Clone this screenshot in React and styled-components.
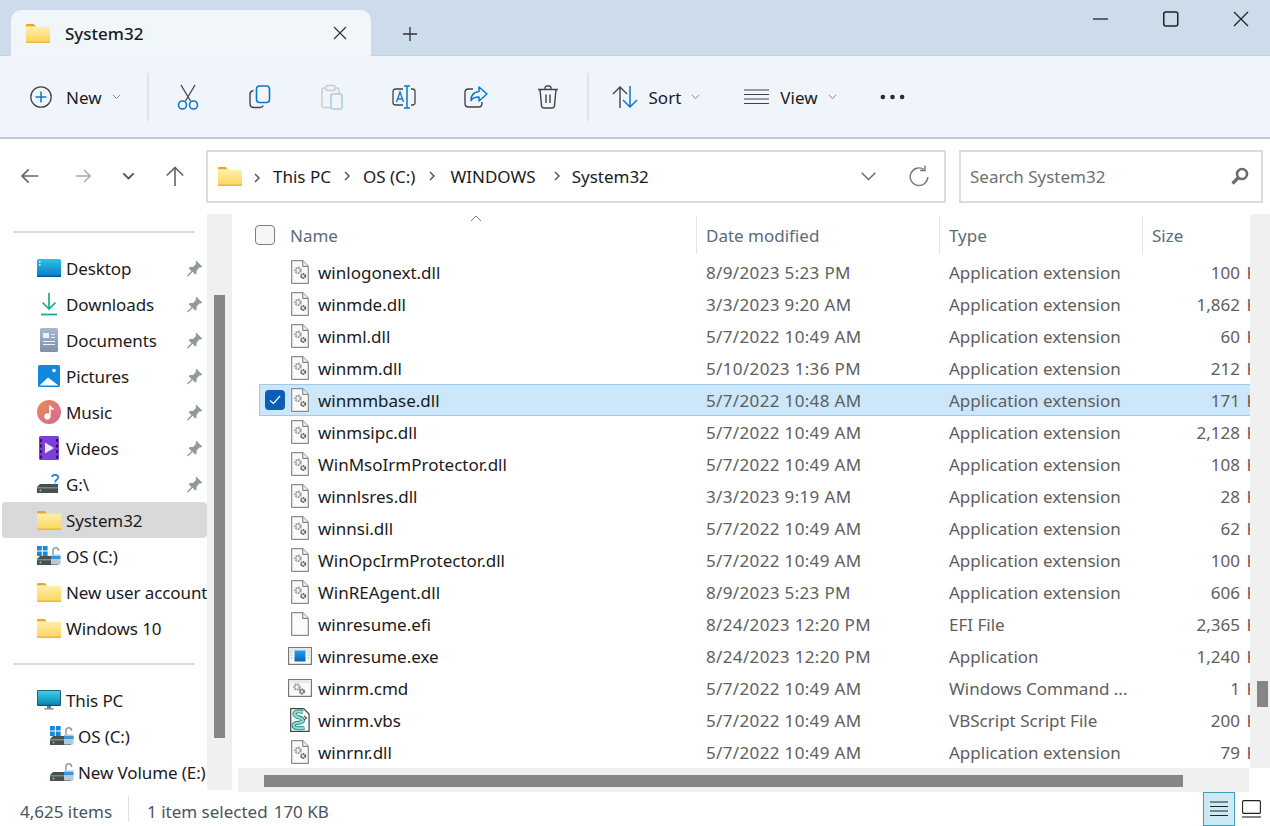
import styled, { createGlobalStyle } from 'styled-components'

const GlobalStyle = createGlobalStyle`
  html, body {
    margin: 0;
    padding: 0;
    background: #fff;
  }
  * {
    box-sizing: border-box;
  }
`

const Window = styled.div`
  width: 1270px;
  height: 826px;
  overflow: hidden;
  display: flex;
  flex-direction: column;
  background: #fff;
  color: #1b1b1b;
  font-family: 'Noto Sans', 'Open Sans', sans-serif;
  font-size: 17px;
`

const TitleBar = styled.div`
  height: 56px;
  flex: none;
  display: flex;
  align-items: flex-end;
  padding-left: 11px;
  background: #cddceb;
  border-bottom: 1px solid #c3d2e0;
`

const Tab = styled.div`
  width: 360px;
  height: 46px;
  margin-bottom: -1px;
  display: flex;
  align-items: center;
  padding: 0 24px 0 15px;
  background: #f1f6fb;
  border-radius: 10px 10px 0 0;
`

const TabTitle = styled.span`
  margin-left: 15px;
  flex: 1;
  font-weight: 500;
`

const NewTab = styled.div`
  margin: 0 0 15px 31px;
  height: 16px;
`

const WindowControls = styled.div`
  margin-left: auto;
  align-self: flex-start;
  display: flex;
  gap: 54px;
  padding: 11px 21px 0 0;
`

const Toolbar = styled.div`
  height: 83px;
  flex: none;
  display: flex;
  align-items: center;
  padding-left: 30px;
  background: #f0f5fb;
  border-bottom: 2px solid #bccad7;
`

const ToolGroup = styled.div`
  display: flex;
  align-items: center;
  margin-left: ${props => props.$offset || 0}px;
`

const ToolLabel = styled.span`
  margin-left: ${props => props.$gap}px;
  margin-right: 10px;
  padding-top: 2px;
`

const ToolDivider = styled.div`
  width: 2px;
  height: 48px;
  margin-left: ${props => props.$offset}px;
  background: #dfe4ea;
`

const IconButton = styled.div`
  width: 72px;
  display: flex;
  justify-content: center;
`

const AddressRow = styled.div`
  height: 75px;
  flex: none;
  display: flex;
  align-items: center;
  padding-bottom: 1px;
`

const NavArrows = styled.div`
  width: 206px;
  flex: none;
  display: grid;
  grid-template-columns: 54px 48px 43px 20px;
  padding-left: 20px;
  justify-items: start;
  align-items: center;
`

const AddressBox = styled.div`
  width: 740px;
  height: 53px;
  flex: none;
  display: flex;
  align-items: center;
  padding: 0 15px 0 10px;
  border: 2px solid #dcdcdc;
`

const Crumb = styled.span`
  margin: 0 ${props => props.$after || 0}px 0 ${props => props.$before || 0}px;
`

const AddressActions = styled.div`
  margin-left: auto;
  display: flex;
  align-items: center;
  gap: 32px;
`

const SearchBox = styled.div`
  width: 304px;
  height: 53px;
  flex: none;
  margin-left: 13px;
  display: flex;
  align-items: center;
  justify-content: space-between;
  padding: 0 12px 0 9px;
  border: 2px solid #dcdcdc;
  color: #6f6f6f;
`

const Main = styled.div`
  flex: 1;
  min-height: 0;
  display: flex;
`

const Sidebar = styled.div`
  width: 207px;
  flex: none;
  overflow: hidden;
  padding-top: 17px;
  letter-spacing: -0.1px;
`

const NavDivider = styled.div`
  height: 2px;
  margin: ${props => props.$top || 0}px 12px ${props => props.$bottom}px 13px;
  background: #dcdcdc;
`

const NavItem = styled.div`
  height: 36px;
  margin-left: 2px;
  display: flex;
  align-items: center;
  padding-left: ${props => (props.$child ? 48 : 35)}px;
  border-radius: 4px;
  white-space: nowrap;
  background: ${props => (props.$active ? '#d9d9d9' : 'transparent')};
`

const NavIcon = styled.span`
  width: ${props => (props.$child ? 28 : 29)}px;
  flex: none;
  display: flex;
  align-items: center;
`

const NavPin = styled.span`
  margin-left: auto;
  margin-right: 4px;
  display: flex;
`

const SideScroll = styled.div`
  width: 25px;
  height: 576px;
  flex: none;
  padding: 81px 7px 0;
  background: #f0f0f0;
`

const SideThumb = styled.div`
  width: 11px;
  height: 443px;
  background: #868686;
`

const Content = styled.div`
  width: 1032px;
  margin-left: 6px;
  flex: none;
  display: flex;
  flex-direction: column;
`

const ListArea = styled.div`
  height: 554px;
  flex: none;
  display: flex;
`

const Viewport = styled.div`
  width: 1012px;
  flex: none;
  overflow: hidden;
  padding-left: 21px;
`

const Columns = styled.div`
  width: 1009px;
  display: grid;
  grid-template-columns: 32px 27px 378px 243px 203px 126px;
  align-items: center;
`

const HeaderRow = styled(Columns)`
  height: 42px;
  position: relative;
  color: #5b6b7c;
`

const HeaderBox = styled.span`
  width: 20px;
  height: 20px;
  margin-left: -4px;
  border: 1.5px solid #7d7d7d;
  border-radius: 4px;
  background: #f6f6f6;
`

const HeaderCell = styled.div`
  height: 38px;
  display: flex;
  align-items: center;
  padding-left: ${props => (props.$name ? 0 : 9)}px;
  border-left: ${props => (props.$name ? 'none' : '1px solid #e4e4e4')};
  margin-left: ${props => (props.$name ? '-28px' : 0)};
  grid-column: ${props => (props.$name ? '3' : 'auto')};
`

const SortCaret = styled.svg`
  position: absolute;
  left: 211px;
  top: 1px;
`

const FileRow = styled(Columns)`
  height: 32px;
  background: ${props => (props.$selected ? '#cce6fa' : 'transparent')};
  box-shadow: ${props => (props.$selected ? 'inset 0 0 0 1px #9fcbe8' : 'none')};
`

const RowCheck = styled.span`
  width: 20px;
  height: 20px;
  margin-left: 6px;
  display: flex;
  align-items: center;
  justify-content: center;
  border-radius: 4px;
  background: #0a5fb4;
`

const FileIconCell = styled.div`
  display: flex;
  align-items: center;
`

const FileName = styled.div`
  white-space: nowrap;
`

const Cell = styled.div`
  padding-left: 10px;
  color: #5e5e5e;
  white-space: nowrap;
  letter-spacing: ${props => (props.$spaced ? '0.35px' : 'normal')};
  word-spacing: ${props => (props.$right ? '2px' : 'normal')};
  text-align: ${props => (props.$right ? 'right' : 'left')};
`

const ListScroll = styled.div`
  width: 20px;
  flex: none;
  padding: 467px 2px 0 7px;
  background: #f0f0f0;
`

const ListThumb = styled.div`
  height: 26px;
  background: #868686;
`

const BottomScroll = styled.div`
  width: 1011px;
  height: 24px;
  flex: none;
  padding: 7px 0 0 26px;
  background: #f0f0f0;
`

const BottomThumb = styled.div`
  width: 919px;
  height: 12px;
  background: #868686;
`

const StatusBar = styled.div`
  height: 34px;
  flex: none;
  display: flex;
  align-items: center;
  padding-left: 20px;
  color: #4a5560;
`

const StatusPart = styled.span`
  margin-left: ${props => props.$offset || 0}px;
  padding-top: 4px;
`

const StatusDivider = styled.div`
  width: 1px;
  height: 26px;
  margin-left: 16px;
  background: #e2e2e2;
`

const ViewSwitch = styled.div`
  margin-left: auto;
  display: flex;
  align-items: center;
  padding-right: 9px;
`

const ViewButton = styled.div`
  width: 32px;
  height: 34px;
  display: flex;
  align-items: center;
  justify-content: center;
  margin-right: ${props => props.$gap || 0}px;
  background: ${props => (props.$active ? '#cce8f5' : 'transparent')};
  border: ${props => (props.$active ? '1px solid #3f9fb8' : 'none')};
`

const Chevron = ({ size = 9, color = '#888', width = 1.1 }) => (
  <svg width={size} height={size * 0.6} viewBox="0 0 10 6" fill="none">
    <path d="M1 1l4 4 4-4" stroke={color} strokeWidth={width} />
  </svg>
)

const CrumbArrow = () => (
  <svg width="6" height="10" viewBox="0 0 6 10" fill="none">
    <path d="M1 1l4 4-4 4" stroke="#555" strokeWidth="1.5" />
  </svg>
)

const Folder = ({ w = 24, h = 19 }) => (
  <svg width={w} height={h} viewBox="0 0 24 19">
    <defs>
      <linearGradient id="folderFill" x1="0" y1="0" x2="0" y2="1">
        <stop offset="0" stopColor="#fff0a6" />
        <stop offset="1" stopColor="#fbd35c" />
      </linearGradient>
    </defs>
    <path d="M0 1.2C0 .5.5 0 1.2 0h6.3l2.6 2.4H0z" fill="#e9a820" />
    <path d="M0 2.8h24V18a1 1 0 0 1-1 1H1a1 1 0 0 1-1-1z" fill="url(#folderFill)" />
    <path d="M0 17.6h24V18a1 1 0 0 1-1 1H1a1 1 0 0 1-1-1z" fill="#eeb83e" />
  </svg>
)

const Pin = () => (
  <svg width="17" height="17" viewBox="0 0 17 17">
    <path d="M10.4.8l5.8 5.8-1.4 1-1-.4-3.1 3.1-.2 3.2-1.2 1.2-2.7-2.9-4.6 4.6L1 15.6l4.5-4.6-2.9-2.8 1.2-1.2 3.3-.1L10.1 3.8l-.6-1.3z" fill="#8f9a9e" />
  </svg>
)

const Gears = () => (
  <g fill="none">
    <circle cx="7" cy="10.4" r="2.6" stroke="#a3a3a3" strokeWidth="2.4" strokeDasharray="1.8 .6" />
    <circle cx="12.2" cy="16" r="2" stroke="#666" strokeWidth="2" strokeDasharray="1.5 .5" />
  </g>
)

const Page = ({ children }) => (
  <svg width="18" height="24" viewBox="0 0 18 24">
    <path d="M.7.7h11l5.6 5.6v17H.7z" fill="#fbfbfb" stroke="#8b8b8b" strokeWidth="1.2" />
    <path d="M11.7.7v5.6h5.6" fill="#f0f0f0" stroke="#8b8b8b" strokeWidth="1.2" />
    {children}
  </svg>
)

const WideIcon = ({ children }) => (
  <svg width="24" height="18" viewBox="0 0 24 18" style={{ marginLeft: -3 }}>
    <rect x=".6" y=".6" width="22.8" height="16.8" fill="#fafafa" stroke="#777" strokeWidth="1.2" />
    <path d="M1 1h22v3H1z" fill="#e8e8e8" />
    {children}
  </svg>
)

const ExeIcon = () => (
  <WideIcon>
    <defs>
      <linearGradient id="exeFill" x1="0" y1="0" x2="0" y2="1">
        <stop offset="0" stopColor="#22a0ee" />
        <stop offset="1" stopColor="#0a62c0" />
      </linearGradient>
    </defs>
    <path d="M6.5 3.5h11v11h-11z" fill="url(#exeFill)" />
    <path d="M2.5 5h2M2.5 8h2M2.5 11h2M19.5 5h2M19.5 8h2M19.5 11h2" stroke="#9bb" strokeWidth="1" />
  </WideIcon>
)

const CmdIcon = () => (
  <WideIcon>
    <circle cx="9" cy="8" r="2.6" fill="none" stroke="#a3a3a3" strokeWidth="2.4" strokeDasharray="1.8 .6" />
    <circle cx="14" cy="12.6" r="2" fill="none" stroke="#666" strokeWidth="2" strokeDasharray="1.5 .5" />
  </WideIcon>
)

const VbsIcon = () => (
  <svg width="20" height="24" viewBox="0 0 20 24" style={{ marginLeft: -1 }}>
    <path d="M.7.7h13l5.4 5.4v17.2H.7z" fill="#f7fbfb" stroke="#444" strokeWidth="1.2" />
    <path d="M13 4c-5-1.500-9-.5-8.500 2.500S13 9 13 12.500s-9 1-9.500 4.500 7 4 11 2.500" fill="none" stroke="#2a7f78" strokeWidth="4" />
    <path d="M13 4c-5-1.500-9-.5-8.500 2.500S13 9 13 12.500s-9 1-9.500 4.500 7 4 11 2.500" fill="none" stroke="#8fe0d4" strokeWidth="2.200" />
    <path d="M14 8l2.500 2-2.500 2" fill="none" stroke="#555" strokeWidth="1.200" />
  </svg>
)

const fileIcon = kind => {
  if (kind === 'blank') return <Page />
  if (kind === 'exe') return <ExeIcon />
  if (kind === 'cmd') return <CmdIcon />
  if (kind === 'vbs') return <VbsIcon />
  return (
    <Page>
      <Gears />
    </Page>
  )
}

const Desktop = () => (
  <svg width="24" height="18" viewBox="0 0 24 18">
    <defs>
      <linearGradient id="deskFill" x1="0" y1="0" x2="0" y2="1">
        <stop offset="0" stopColor="#2ac4e2" />
        <stop offset="1" stopColor="#0a78c8" />
      </linearGradient>
    </defs>
    <rect width="24" height="18" rx="1.500" fill="url(#deskFill)" />
    <path d="M2 2h1.500v1.500H2zM2 5h1.500v1.500H2z" fill="#dff" />
    <path d="M0 16.500h24V18H0z" fill="#085a94" />
  </svg>
)

const Downloads = () => (
  <svg width="18" height="24" viewBox="0 0 18 24" style={{ marginLeft: 3 }} fill="none">
    <path d="M9 1v16M2.500 10.500L9 17l6.500-6.500" stroke="#1cab89" strokeWidth="1.700" />
    <path d="M1 22.500h16" stroke="#1cab89" strokeWidth="1.800" />
  </svg>
)

const Documents = () => (
  <svg width="18" height="24" viewBox="0 0 18 24" style={{ marginLeft: 3 }}>
    <defs>
      <linearGradient id="docFill" x1="0" y1="0" x2="0" y2="1">
        <stop offset="0" stopColor="#a7b8cf" />
        <stop offset="1" stopColor="#7f90a8" />
      </linearGradient>
    </defs>
    <rect width="18" height="24" rx="1.500" fill="url(#docFill)" />
    <path d="M3 5h6v5H3zM11 6h4v1h-4zM11 9h4v1h-4zM3 13h12v1H3zM3 16h12v1H3z" fill="#eef2f7" />
  </svg>
)

const Pictures = () => (
  <svg width="22" height="22" viewBox="0 0 22 22" style={{ marginLeft: 1 }}>
    <rect width="22" height="22" rx="1.500" fill="#1287e0" />
    <circle cx="16" cy="5.500" r="1.800" fill="#fff" />
    <path d="M1.500 20.500L10 12.500l10.500 8z" fill="#fff" />
  </svg>
)

const Music = () => (
  <svg width="24" height="24" viewBox="0 0 24 24">
    <defs>
      <linearGradient id="musicFill" x1="0" y1="0" x2="1" y2="1">
        <stop offset="0" stopColor="#ee8a50" />
        <stop offset="1" stopColor="#d06a9a" />
      </linearGradient>
    </defs>
    <circle cx="12" cy="12" r="12" fill="url(#musicFill)" />
    <path d="M12 5.500h1.600c.3 1.800 2 2.200 3 2.500v2c-1.200 0-2.200-.4-3-1v7.500a3.200 3.200 0 1 1-1.600-2.800z" fill="#fff" />
  </svg>
)

const Videos = () => (
  <svg width="20" height="24" viewBox="0 0 20 24" style={{ marginLeft: 2 }}>
    <rect width="20" height="24" rx="1.500" fill="#7d3fd6" />
    <path d="M1 3h2v3H1zM1 8.500h2v3H1zM1 14h2v3H1zM1 19.500h2v3H1zM17 3h2v3h-2zM17 8.500h2v3h-2zM17 14h2v3h-2zM17 19.500h2v3h-2z" fill="#2d1466" />
    <path d="M6 6.500l9 5.500-9 5.500z" fill="#efe6ff" />
  </svg>
)

const DriveBody = () => (
  <>
    <path d="M0 13l3-3h18v9H0z" fill="#47504d" />
    <path d="M0 13h21v1.500H0z" fill="#7e8784" />
    <circle cx="3.500" cy="16.500" r="1" fill="#66e05a" />
  </>
)

const Drive = ({ mark }) => (
  <svg width="24" height="20" viewBox="0 0 24 20">
    <DriveBody />
    {mark && <path d="M15 3c.5-3 6-3 6.200.3.100 2.400-3 2.300-3 5M18.200 9.500v1.500" fill="none" stroke="#1886d8" strokeWidth="1.800" />}
  </svg>
)

const LockDrive = ({ windows }) => (
  <svg width="24" height="20" viewBox="0 0 24 20">
    <DriveBody />
    <path d="M14 8.500h9.500V18.500h-9.500z" fill="#b9c8d6" />
    <path d="M14 10h9.500v3H14z" fill="#3a97dd" />
    <path d="M16 8.500V4a2.800 2.800 0 0 1 5.500 0v1" fill="none" stroke="#8c9cab" strokeWidth="1.500" />
    {windows && <path d="M0 0h4.800v4.500H0zM5.800 0h4.800v4.500H5.800zM0 5.500h4.800V10H0zM5.800 5.500h4.800V10H5.800z" fill="#1787dc" />}
  </svg>
)

const Monitor = () => (
  <svg width="24" height="20" viewBox="0 0 24 20">
    <defs>
      <linearGradient id="pcFill" x1="0" y1="0" x2="0" y2="1">
        <stop offset="0" stopColor="#3bd0e6" />
        <stop offset="1" stopColor="#0d86ba" />
      </linearGradient>
    </defs>
    <rect width="24" height="16" rx="1.200" fill="#1e4a63" />
    <rect x=".8" y=".8" width="22.400" height="14" fill="url(#pcFill)" />
    <path d="M10 16h4v2h-4zM7.500 18.300h9v1.200h-9z" fill="#6b7780" />
  </svg>
)

const pinned = [
  ['Desktop', <Desktop />],
  ['Downloads', <Downloads />],
  ['Documents', <Documents />],
  ['Pictures', <Pictures />],
  ['Music', <Music />],
  ['Videos', <Videos />],
  ['G:\\', <Drive mark />],
]

const files = [
  ['winlogonext.dll', '8/9/2023 5:23 PM', 'Application extension', '100 KB'],
  ['winmde.dll', '3/3/2023 9:20 AM', 'Application extension', '1,862 KB'],
  ['winml.dll', '5/7/2022 10:49 AM', 'Application extension', '60 KB'],
  ['winmm.dll', '5/10/2023 1:36 PM', 'Application extension', '212 KB'],
  ['winmmbase.dll', '5/7/2022 10:48 AM', 'Application extension', '171 KB'],
  ['winmsipc.dll', '5/7/2022 10:49 AM', 'Application extension', '2,128 KB'],
  ['WinMsoIrmProtector.dll', '5/7/2022 10:49 AM', 'Application extension', '108 KB'],
  ['winnlsres.dll', '3/3/2023 9:19 AM', 'Application extension', '28 KB'],
  ['winnsi.dll', '5/7/2022 10:49 AM', 'Application extension', '62 KB'],
  ['WinOpcIrmProtector.dll', '5/7/2022 10:49 AM', 'Application extension', '100 KB'],
  ['WinREAgent.dll', '8/9/2023 5:23 PM', 'Application extension', '606 KB'],
  ['winresume.efi', '8/24/2023 12:20 PM', 'EFI File', '2,365 KB', 'blank'],
  ['winresume.exe', '8/24/2023 12:20 PM', 'Application', '1,240 KB', 'exe'],
  ['winrm.cmd', '5/7/2022 10:49 AM', 'Windows Command ...', '1 KB', 'cmd'],
  ['winrm.vbs', '5/7/2022 10:49 AM', 'VBScript Script File', '200 KB', 'vbs'],
  ['winrnr.dll', '5/7/2022 10:49 AM', 'Application extension', '79 KB'],
]

export default function App() {
  return (
    <Window>
      <GlobalStyle />
      <TitleBar>
        <Tab>
          <Folder />
          <TabTitle>System32</TabTitle>
          <svg width="14" height="14" viewBox="0 0 14 14" stroke="#333" strokeWidth="1.200">
            <path d="M1 1l12 12M13 1L1 13" />
          </svg>
        </Tab>
        <NewTab>
          <svg width="16" height="16" viewBox="0 0 16 16" stroke="#333" strokeWidth="1.300">
            <path d="M8 1v14M1 8h14" />
          </svg>
        </NewTab>
        <WindowControls>
          <svg width="16" height="16" viewBox="0 0 16 16" stroke="#222" strokeWidth="1.300">
            <path d="M0 8h15" />
          </svg>
          <svg width="16" height="16" viewBox="0 0 16 16" fill="none" stroke="#222" strokeWidth="1.500">
            <rect x=".75" y="1" width="14" height="14" rx="2" />
          </svg>
          <svg width="16" height="16" viewBox="0 0 16 16" stroke="#222" strokeWidth="1.300">
            <path d="M1 1l14 14M15 1L1 15" />
          </svg>
        </WindowControls>
      </TitleBar>

      <Toolbar>
        <ToolGroup>
          <svg width="22" height="22" viewBox="0 0 22 22" fill="none">
            <circle cx="11" cy="11" r="10.200" stroke="#444" strokeWidth="1.300" />
            <path d="M11 5.500v11M5.500 11h11" stroke="#0a78c8" strokeWidth="1.500" />
          </svg>
          <ToolLabel $gap={14}>New</ToolLabel>
          <Chevron />
        </ToolGroup>
        <ToolDivider $offset={26} />
        <ToolGroup $offset={3}>
          <IconButton>
            <svg width="22" height="26" viewBox="0 0 22 26" fill="none">
              <path d="M4 1l9.500 16M18 1L8.500 17" stroke="#444" strokeWidth="1.300" />
              <circle cx="5.500" cy="21" r="4" stroke="#0a78c8" strokeWidth="1.600" />
              <circle cx="16.500" cy="21" r="4" stroke="#0a78c8" strokeWidth="1.600" />
            </svg>
          </IconButton>
          <IconButton>
            <svg width="22" height="24" viewBox="0 0 22 24" fill="none">
              <rect x="7.500" y="1" width="13" height="16.500" rx="3" stroke="#0a78c8" strokeWidth="1.600" />
              <path d="M4.500 5.500C2.500 6 1 7 1 9v9.500C1 21 2.500 22.500 5 22.500h6c1.500 0 2.800-.8 3.200-2" stroke="#444" strokeWidth="1.400" />
            </svg>
          </IconButton>
          <IconButton>
            <svg width="22" height="26" viewBox="0 0 22 26" fill="none">
              <path d="M5 4H2.500C1.500 4 1 4.800 1 5.500V22c0 1 .7 1.500 1.500 1.500H9M14 4h2.500c1 0 1.500.7 1.500 1.500V9" stroke="#c8ccd0" strokeWidth="1.400" />
              <rect x="5" y="1.500" width="9" height="5" rx="1.500" stroke="#c8ccd0" strokeWidth="1.400" />
              <rect x="10" y="10" width="11" height="15" rx="2" stroke="#a8cbe4" strokeWidth="1.500" />
            </svg>
          </IconButton>
          <IconButton>
            <svg width="24" height="24" viewBox="0 0 24 24" fill="none">
              <path d="M11 4H3.500C2 4 1 5 1 6.500v11C1 19 2 20 3.500 20H11M19 4h1.500C22 4 23 5 23 6.500v11c0 1.500-1 2.500-2.500 2.500H19" stroke="#444" strokeWidth="1.300" />
              <path d="M15 1v22M12 1h6M12 23h6" stroke="#0a78c8" strokeWidth="1.500" />
              <path d="M4.500 17L8 7l3.500 10M5.700 14h4.600" stroke="#0a78c8" strokeWidth="1.300" />
            </svg>
          </IconButton>
          <IconButton>
            <svg width="24" height="24" viewBox="0 0 24 24" fill="none">
              <path d="M9 4H4.500C2.500 4 1 5.500 1 7.500v11C1 20.500 2.500 22 4.500 22h10c2 0 3.500-1.500 3.500-3.500V17" stroke="#444" strokeWidth="1.400" />
              <path d="M15 2l8 7-8 7v-4c-4 0-6.500 1-8 3.500C7 10.500 10 7 15 6.500z" stroke="#0a78c8" strokeWidth="1.500" strokeLinejoin="round" />
            </svg>
          </IconButton>
          <IconButton>
            <svg width="22" height="24" viewBox="0 0 22 24" fill="none" stroke="#444" strokeWidth="1.400">
              <path d="M1 4.500h20M8 4.500V3c0-1 .8-2 2-2h2c1.200 0 2 1 2 2v1.500" />
              <path d="M3 4.500l1.500 16c.1 1.500 1.200 2.500 2.500 2.500h8c1.300 0 2.400-1 2.500-2.500l1.500-16" />
              <path d="M9 9.500v8.500M13 9.500v8.500" />
            </svg>
          </IconButton>
        </ToolGroup>
        <ToolDivider $offset={3} />
        <ToolGroup $offset={23}>
          <svg width="26" height="24" viewBox="0 0 26 24" fill="none">
            <path d="M8 23V2M1 9l7-7 7 7" stroke="#444" strokeWidth="1.400" />
            <path d="M18 1v21M11 15l7 7 7-7" stroke="#0a78c8" strokeWidth="1.500" />
          </svg>
          <ToolLabel $gap={11}>Sort</ToolLabel>
          <Chevron />
        </ToolGroup>
        <ToolGroup $offset={44}>
          <svg width="25" height="16" viewBox="0 0 25 16" stroke="#444" strokeWidth="1.200">
            <path d="M0 1h25M0 5.500h25M0 10h25M0 14.500h25" />
          </svg>
          <ToolLabel $gap={11}>View</ToolLabel>
          <Chevron />
        </ToolGroup>
        <ToolGroup $offset={43}>
          <svg width="25" height="6" viewBox="0 0 26 6" fill="#2b2b2b">
            <circle cx="3" cy="3" r="2.400" />
            <circle cx="13" cy="3" r="2.400" />
            <circle cx="23" cy="3" r="2.400" />
          </svg>
        </ToolGroup>
      </Toolbar>

      <AddressRow>
        <NavArrows>
          <svg width="20" height="18" viewBox="0 0 24 20" fill="none" stroke="#666" strokeWidth="2">
            <path d="M22 10H3M10.500 2L2.500 10l8 8" />
          </svg>
          <svg width="18" height="18" viewBox="0 0 24 20" fill="none" stroke="#aaa" strokeWidth="2">
            <path d="M2 10h19M13.500 2l8 8-8 8" />
          </svg>
          <Chevron size={13} color="#555" width={1.400} />
          <svg width="20" height="22" viewBox="0 0 22 24" fill="none" stroke="#666" strokeWidth="1.800">
            <path d="M11 23V3M2 11.500L11 2.500l9 9" />
          </svg>
        </NavArrows>
        <AddressBox>
          <Folder />
          <Crumb $before={12} $after={13}><CrumbArrow /></Crumb>
          <Crumb $after={13}>This PC</Crumb>
          <CrumbArrow />
          <Crumb $before={13} $after={14}>OS (C:)</Crumb>
          <CrumbArrow />
          <Crumb $before={15} $after={18}>WINDOWS</Crumb>
          <CrumbArrow />
          <Crumb $before={12}>System32</Crumb>
          <AddressActions>
            <Chevron size={17} color="#666" width={0.800} />
            <svg width="20" height="22" viewBox="0 0 20 22" fill="none" stroke="#777" strokeWidth="1.400">
              <path d="M15 4.500A8.800 8.800 0 1 0 18.800 12" />
              <path d="M16 .5v5h-5" />
            </svg>
          </AddressActions>
        </AddressBox>
        <SearchBox>
          Search System32
          <svg width="18" height="18" viewBox="0 0 18 18" fill="none">
            <circle cx="11" cy="7" r="5" stroke="#6c6c6c" strokeWidth="2.600" />
            <path d="M7 11l-5.500 5.500" stroke="#6c6c6c" strokeWidth="3.200" />
          </svg>
        </SearchBox>
      </AddressRow>

      <Main>
        <Sidebar>
          <NavDivider $bottom={17} />
          {pinned.map(([label, icon]) => (
            <NavItem key={label}>
              <NavIcon>{icon}</NavIcon>
              {label}
              <NavPin><Pin /></NavPin>
            </NavItem>
          ))}
          <NavItem $active>
            <NavIcon><Folder /></NavIcon>
            System32
          </NavItem>
          <NavItem>
            <NavIcon><LockDrive windows /></NavIcon>
            OS (C:)
          </NavItem>
          <NavItem>
            <NavIcon><Folder /></NavIcon>
            New user account
          </NavItem>
          <NavItem>
            <NavIcon><Folder /></NavIcon>
            Windows 10
          </NavItem>
          <NavDivider $top={17} $bottom={17} />
          <NavItem>
            <NavIcon><Monitor /></NavIcon>
            This PC
          </NavItem>
          <NavItem $child>
            <NavIcon $child><LockDrive windows /></NavIcon>
            OS (C:)
          </NavItem>
          <NavItem $child>
            <NavIcon $child><LockDrive /></NavIcon>
            New Volume (E:)
          </NavItem>
        </Sidebar>
        <SideScroll>
          <SideThumb />
        </SideScroll>
        <Content>
          <ListArea>
            <Viewport>
              <HeaderRow>
                <HeaderBox />
                <HeaderCell $name>Name</HeaderCell>
                <HeaderCell>Date modified</HeaderCell>
                <HeaderCell>Type</HeaderCell>
                <HeaderCell>Size</HeaderCell>
                <SortCaret width="12" height="7" viewBox="0 0 12 7" fill="none" stroke="#777" strokeWidth="1">
                  <path d="M1 6l5-5 5 5" />
                </SortCaret>
              </HeaderRow>
              {files.map(([name, date, type, size, kind], index) => (
                <FileRow key={name} $selected={index === 4}>
                  <div>
                    {index === 4 && (
                      <RowCheck>
                        <svg width="12" height="10" viewBox="0 0 12 10" fill="none" stroke="#fff" strokeWidth="1.200">
                          <path d="M1 5.500l3.500 3L11 1" />
                        </svg>
                      </RowCheck>
                    )}
                  </div>
                  <FileIconCell>{fileIcon(kind)}</FileIconCell>
                  <FileName>{name}</FileName>
                  <Cell $spaced>{date}</Cell>
                  <Cell>{type}</Cell>
                  <Cell $right>{size}</Cell>
                </FileRow>
              ))}
            </Viewport>
            <ListScroll>
              <ListThumb />
            </ListScroll>
          </ListArea>
          <BottomScroll>
            <BottomThumb />
          </BottomScroll>
        </Content>
      </Main>

      <StatusBar>
        <StatusPart>4,625 items</StatusPart>
        <StatusDivider />
        <StatusPart $offset={18}>1 item selected</StatusPart>
        <StatusPart $offset={6}>170 KB</StatusPart>
        <ViewSwitch>
          <ViewButton $active $gap={7}>
            <svg width="18" height="16" viewBox="0 0 18 16" stroke="#222" strokeWidth="1.100">
              <path d="M0 1h18M0 5.500h18M0 10h18M0 14.500h18" />
            </svg>
          </ViewButton>
          <svg width="19" height="18" viewBox="0 0 19 18" fill="none" stroke="#222" strokeWidth="1.100">
            <rect x=".6" y=".6" width="17.800" height="12.800" rx="1" />
            <path d="M0 17h19" />
          </svg>
        </ViewSwitch>
      </StatusBar>
    </Window>
  )
}
